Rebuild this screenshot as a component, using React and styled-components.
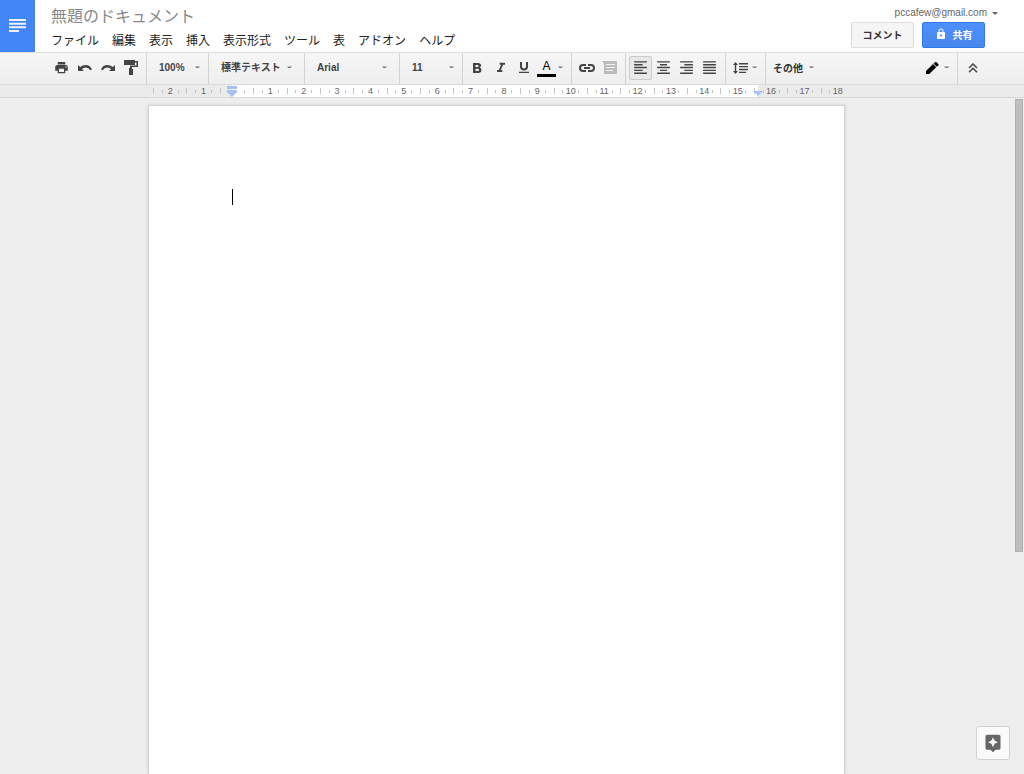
import React, { useState } from 'react';
import styled, { createGlobalStyle } from 'styled-components';
import {
    MdPrint, MdFormatItalic, MdFormatAlignLeft, MdFormatAlignCenter,
    MdFormatAlignRight, MdFormatAlignJustify, MdLock, MdAssistant,
} from 'react-icons/md';


const GlobalStyle = createGlobalStyle`
    * {
        box-sizing: border-box;
    }

    body {
        margin: 0;
        background: #eee;
        font-family: "Liberation Sans", "Noto Sans CJK JP", sans-serif;
    }

    button, select, textarea {
        margin: 0;
        padding: 0;
        border: 0;
        background: none;
        color: inherit;
        font-family: inherit;
    }
`

const Shell = styled.div`
    position: relative;
    display: flex;
    flex-direction: column;
    height: 100vh;
    overflow: hidden;
`

const Header = styled.header`
    display: flex;
    height: 52px;
    background: #fff;
`

const HomeLink = styled.a`
    display: flex;
    align-items: center;
    justify-content: center;
    width: 35px;
    padding-bottom: 2px;
    background: #4285f4;
`

const TitleArea = styled.div`
    flex: 1;
    padding: 5px 0 0 16px;
`

const Title = styled.h1`
    margin: 0 0 4px;
    font-size: 16px;
    font-weight: normal;
    line-height: 24px;
    color: #888;
`

const MenuBar = styled.nav`
    display: flex;
    gap: 13px;
`

const MenuButton = styled.button`
    font-size: 12px;
    line-height: 16px;
    white-space: nowrap;
    color: #222;
`

const Account = styled.div`
    display: flex;
    flex-direction: column;
    align-items: flex-end;
    padding: 6px 39px 0 0;
`

const AccountButton = styled.button`
    display: flex;
    align-items: center;
    gap: 5px;
    margin-right: -13px;
    font-size: 10px;
    line-height: 14px;
    color: #666;
`

const Actions = styled.div`
    display: flex;
    gap: 8px;
    padding-top: 2px;
`

const ActionButton = styled.button`
    display: flex;
    align-items: center;
    justify-content: center;
    gap: 6px;
    width: 63px;
    height: 26px;
    padding-bottom: 2px;
    font-size: 10px;
    font-weight: bold;
    border: 1px solid ${({ $primary }) => ($primary ? '#3079ed' : '#dcdcdc')};
    border-radius: 2px;
    background: ${({ $primary }) => ($primary ? 'linear-gradient(#4d90fe, #4787ed)' : '#f5f5f5')};
    color: ${({ $primary }) => ($primary ? '#fff' : '#333')};
`

const Toolbar = styled.div`
    display: flex;
    align-items: stretch;
    height: 33px;
    padding-left: 47px;
    border-top: 1px solid #e0e0e0;
    border-bottom: 1px solid #dcdcdc;
    background: linear-gradient(#f6f6f6, #eee);
    color: #444;
`

const Group = styled.div`
    display: flex;
    align-items: center;
    width: ${({ $width }) => $width}px;
    padding: 0 0 2px 3px;
    border-left: ${({ $first }) => ($first ? '0' : '1px solid #d2d2d2')};
`

const Spacer = styled.div`
    flex: 1;
`

const ToolButton = styled.button`
    display: flex;
    flex-shrink: 0;
    align-items: center;
    justify-content: center;
    width: 23px;
    height: 24px;
    border: 1px solid ${({ $active }) => ($active ? '#ccc' : 'transparent')};
    border-radius: 2px;
    background: ${({ $active }) => ($active ? '#e8e8e8' : 'none')};
    color: ${({ disabled }) => (disabled ? '#bbb' : '#444')};
`

const ColorLetter = styled.span`
    padding: 0 5px;
    font-size: 12px;
    line-height: 16px;
    color: #000;
    border-bottom: 3px solid #000;
`

const MoreButton = styled.button`
    display: flex;
    align-items: center;
    gap: 6px;
    padding-left: 4px;
    font-size: 10px;
    font-weight: bold;
    color: #333;
`

const Picker = styled.label`
    display: flex;
    flex: 1;
    align-items: center;
    padding: 0 ${({ $end }) => $end}px 0 9px;
`

const PickerSelect = styled.select`
    flex: 1;
    min-width: 0;
    appearance: none;
    outline: none;
    font-size: 10px;
    font-weight: bold;
    line-height: 16px;
    color: #444;
`

const Ruler = styled.div`
    display: flex;
    justify-content: center;
    height: 13px;
    padding-right: 32px;
    border-bottom: 1px solid #d8d8d8;
    background: #ebebeb;
`

const RulerStrip = styled.div`
    position: relative;
    display: flex;
    flex-shrink: 0;
    align-items: center;
    width: 698px;
    overflow: hidden;
    background: linear-gradient(90deg, transparent 85px, #fff 85px, #fff 611px, transparent 611px);
`

const Scale = styled.div`
    display: grid;
    flex-shrink: 0;
    grid-template-columns: repeat(21, 1fr);
    width: 701px;
    margin-left: 6px;
`

const Centimetre = styled.div`
    display: grid;
    grid-template-columns: 1fr 15px 1fr;
    grid-template-rows: 6px;
    align-items: center;
    border-left: 1px solid #c4c4c4;
    font-size: 9px;
    line-height: 6px;
    text-align: center;
    color: #666;
`

const SmallTick = styled.i`
    justify-self: ${({ $end }) => ($end ? 'end' : 'start')};
    width: 1px;
    height: 3px;
    background: #c4c4c4;
`

const IndentMarker = styled.svg`
    position: absolute;
    top: 1px;
    left: ${({ $left }) => $left}px;
`

const Editor = styled.main`
    position: relative;
    display: flex;
    flex: 1;
    justify-content: center;
    padding: 7px 32px 0 0;
`

const Page = styled.textarea`
    display: block;
    width: 697px;
    padding: 83px 84px;
    resize: none;
    outline: none;
    border: 1px solid #d4d4d4;
    border-bottom: 0;
    background: #fff;
    box-shadow: 0 0 3px rgba(0, 0, 0, .15);
    font-size: 15px;
    line-height: 17px;
    caret-color: transparent;
`

const Caret = styled.span`
    position: absolute;
    top: 91px;
    left: calc(50% - 280px);
    width: 1px;
    height: 16px;
    background: #000;
`

const ScrollThumb = styled.div`
    position: absolute;
    top: 1px;
    right: 1px;
    width: 8px;
    height: 67%;
    border: 1px solid #b0b0b0;
    background: #bebebe;
`

const ExploreButton = styled.button`
    position: absolute;
    right: 14px;
    bottom: 14px;
    display: flex;
    align-items: center;
    justify-content: center;
    width: 34px;
    height: 34px;
    border: 1px solid #d2d2d2;
    border-radius: 3px;
    background: #fafafa;
    color: #666;
`

const menus = ['ファイル', '編集', '表示', '挿入', '表示形式', 'ツール', '表', 'アドオン', 'ヘルプ']

const alignments = [
    { name: '左揃え', Icon: MdFormatAlignLeft },
    { name: '中央揃え', Icon: MdFormatAlignCenter },
    { name: '右揃え', Icon: MdFormatAlignRight },
    { name: '両端揃え', Icon: MdFormatAlignJustify },
]

// -2 to 18, zero sits under the left indent
const centimetres = Array.from({ length: 21 }, (_, i) => Math.abs(i - 2))

function Arrow() {
    return (
        <svg width="5" height="3" viewBox="0 0 5 3" fill="#777" aria-hidden="true">
            <path d="M0 .5h5L3.500 2h-2z" />
        </svg>
    )
}

function UndoIcon() {
    return (
        <svg width="14" height="8" viewBox="0 0 14 8" fill="currentColor">
            <path d="M0 1v6h6L3.900 4.900Q5.500 3.400 7.800 3.400q3 0 4.400 2.800l1.800-.8Q12 1 7.800 1 4.600 1 2.100 3.100z" />
        </svg>
    )
}

function RedoIcon() {
    return (
        <svg width="14" height="8" viewBox="0 0 14 8" fill="currentColor">
            <path d="M14 1v6H8l2.100-2.100Q8.500 3.400 6.200 3.400q-3 0-4.400 2.800L0 5.400Q2 1 6.200 1q3.200 0 5.700 2.100z" />
        </svg>
    )
}

function ToolbarPicker({ label, options, end = 8 }) {
    return (
        <Picker $end={end}>
            <PickerSelect aria-label={label}>
                {options.map((option) => <option key={option}>{option}</option>)}
            </PickerSelect>
            <Arrow />
        </Picker>
    )
}

export default function App() {
    const [align, setAlign] = useState('左揃え')

    return (
        <Shell>
            <GlobalStyle />
            <Header>
                <HomeLink href="#" aria-label="ドキュメント ホーム">
                    <svg width="17" height="13" viewBox="0 0 17 13" fill="#fff">
                        <path d="M0 0h17v2H0zM0 3.700h17v2H0zM0 7.300h17v2H0zM0 11h10v2H0z" opacity=".9" />
                    </svg>
                </HomeLink>
                <TitleArea>
                    <Title>無題のドキュメント</Title>
                    <MenuBar>
                        {menus.map((menu) => <MenuButton key={menu}>{menu}</MenuButton>)}
                    </MenuBar>
                </TitleArea>
                <Account>
                    <AccountButton>
                        pccafew@gmail.com
                        <svg width="6" height="3" viewBox="0 0 6 3" fill="#666"><path d="M0 0h6L3 3z" /></svg>
                    </AccountButton>
                    <Actions>
                        <ActionButton>コメント</ActionButton>
                        <ActionButton $primary><MdLock size={12} />共有</ActionButton>
                    </Actions>
                </Account>
            </Header>

            <Toolbar>
                <Group $first $width={99}>
                    <ToolButton aria-label="印刷"><MdPrint size={15} /></ToolButton>
                    <ToolButton aria-label="元に戻す"><UndoIcon /></ToolButton>
                    <ToolButton aria-label="やり直し"><RedoIcon /></ToolButton>
                    <ToolButton aria-label="書式のコピー">
                        <svg width="14" height="15" viewBox="0 0 14 15" fill="currentColor">
                            <path d="M0 0h11v1h3v6H8v2h1v6H5V8h1V5.500h6.500V2.500H11V5H0z" />
                        </svg>
                    </ToolButton>
                </Group>
                <Group $width={62}>
                    <ToolbarPicker label="ズーム" options={['100%', '50%', '75%', '125%', '150%']} />
                </Group>
                <Group $width={96}>
                    <ToolbarPicker label="スタイル" options={['標準テキスト', 'タイトル', '見出し 1', '見出し 2']} end={12} />
                </Group>
                <Group $width={95}>
                    <ToolbarPicker label="フォント" options={['Arial', 'Georgia', 'Verdana']} end={12} />
                </Group>
                <Group $width={63}>
                    <ToolbarPicker label="フォントサイズ" options={['11', '8', '9', '10', '12', '14']} />
                </Group>
                <Group $width={109}>
                    <ToolButton aria-label="太字">
                        <svg width="9" height="10" viewBox="0 0 9 10" fill="currentColor">
                            <path fillRule="evenodd" d="M0 0h5q3 0 3 2.600 0 1.400-1.200 2Q8.500 5.200 8.500 7q0 3-3.300 3H0zM2.500 1.900V4h2Q5.600 4 5.600 2.900T4.500 1.900zM2.500 5.800v2.300h2.300q1.200 0 1.200-1.200T4.800 5.800z" />
                        </svg>
                    </ToolButton>
                    <ToolButton aria-label="斜体"><MdFormatItalic size={16} /></ToolButton>
                    <ToolButton aria-label="下線">
                        <svg width="10" height="11" viewBox="0 0 10 11" fill="currentColor">
                            <path d="M1 0h2v4.500q0 2 2 2t2-2V0h2v4.500q0 4-4 4t-4-4zM0 9.700h10V11H0z" />
                        </svg>
                    </ToolButton>
                    <ToolButton aria-label="テキストの色"><ColorLetter>A</ColorLetter></ToolButton>
                    <Arrow />
                </Group>
                <Group $width={54}>
                    <ToolButton aria-label="リンクを挿入">
                        <svg width="16" height="8" viewBox="0 0 16 8" fill="none" stroke="currentColor" strokeWidth="2">
                            <path d="M7 1H4a3 3 0 0 0 0 6h3M9 1h3a3 3 0 0 1 0 6H9M5 4h6" />
                        </svg>
                    </ToolButton>
                    <ToolButton aria-label="コメントを追加" disabled>
                        <svg width="15" height="13" viewBox="0 0 15 13" fill="currentColor">
                            <path fillRule="evenodd" d="M0 0h14q1 0 1 1v11q0 1-1 1H3q-1 0-1-1V3zM4 3v1h9V3zM4 6v1h9V6zM4 9v1h7V9z" />
                        </svg>
                    </ToolButton>
                </Group>
                <Group $width={100}>
                    {alignments.map(({ name, Icon }) => (
                        <ToolButton
                            key={name}
                            aria-label={name}
                            $active={align === name}
                            onClick={() => setAlign(name)}
                        >
                            <Icon size={17} />
                        </ToolButton>
                    ))}
                </Group>
                <Group $width={40}>
                    <ToolButton aria-label="行間">
                        <svg width="15" height="12" viewBox="0 0 15 12" fill="currentColor">
                            <path d="M2.500 0L5 3H3.200v6H5l-2.500 3L0 9h1.800V3H0zM6 1h9v1.400H6zM6 3.900h9v1.400H6zM6 6.800h9v1.400H6zM6 9.700h7v1.400H6z" />
                        </svg>
                    </ToolButton>
                    <Arrow />
                </Group>
                <Group $width={60}>
                    <MoreButton>その他 <Arrow /></MoreButton>
                </Group>
                <Spacer />
                <Group $first $width={39}>
                    <ToolButton aria-label="編集モード">
                        <svg width="13" height="12" viewBox="0 0 13 12" fill="#000">
                            <path d="M0 12V9l7-7 3.200 3.200L3.200 12zM7.500 1.500L9 .3q.8-.6 1.600 0l1.700 1.700q.7.8 0 1.600l-1.600 1.200z" />
                        </svg>
                    </ToolButton>
                    <Arrow />
                </Group>
                <Group $width={67}>
                    <ToolButton aria-label="メニューを非表示">
                        <svg width="10" height="10" viewBox="0 0 10 10" fill="none" stroke="currentColor" strokeWidth="1.500">
                            <path d="M1 5l4-4 4 4M1 9.300l4-4 4 4" />
                        </svg>
                    </ToolButton>
                </Group>
            </Toolbar>

            <Ruler>
                <RulerStrip>
                    <SmallTick />
                    <Scale>
                        {centimetres.map((number, i) => (
                            <Centimetre key={i}>
                                <SmallTick $end />
                                <span>{number || ''}</span>
                                <SmallTick />
                            </Centimetre>
                        ))}
                    </Scale>
                    <IndentMarker $left={80} width="10" height="11" viewBox="0 0 10 11" fill="#a4c2f9">
                        <path d="M0 0h10v3H0zM0 4h10v2L5 11 0 6z" />
                    </IndentMarker>
                    <IndentMarker $left={606} width="10" height="11" viewBox="0 0 10 11" fill="#a4c2f9">
                        <path d="M0 5h10L5 10z" />
                    </IndentMarker>
                </RulerStrip>
            </Ruler>

            <Editor>
                <Page aria-label="ドキュメントの本文" />
                <Caret />
                <ScrollThumb />
            </Editor>

            <ExploreButton aria-label="データ探索"><MdAssistant size={20} /></ExploreButton>
        </Shell>
    )
}
